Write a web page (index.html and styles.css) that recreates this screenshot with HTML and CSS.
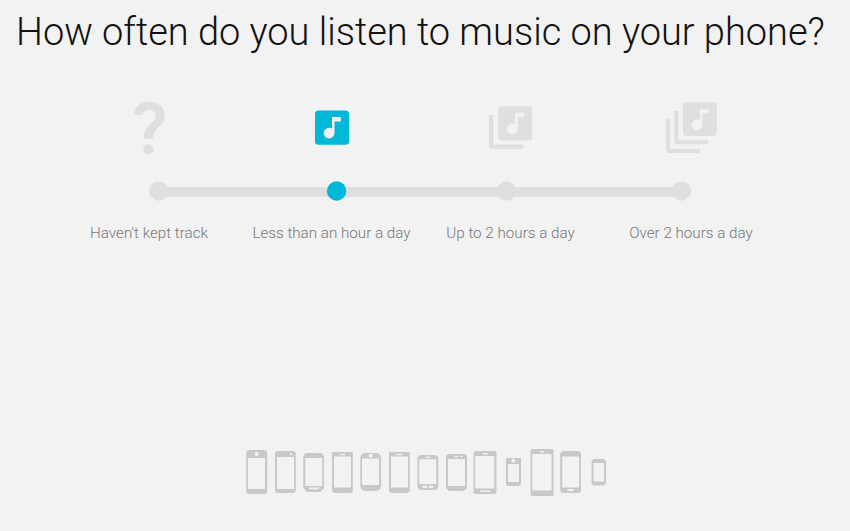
FILE: index.html
```
<!DOCTYPE html>
<html lang="en">
<head>
  <meta charset="UTF-8">
  <title>Music survey</title>
  <link rel="stylesheet" href="styles.css">
</head>
<body>
  <h1>How often do you listen to music on your phone?</h1>

  <!-- Answers -->
  <div class="options">
    <div class="option">
      <svg class="icon" width="54" height="58" viewBox="0 0 54 58">
        <path d="M12 15C12 7 18.500 1.500 27.300 1.500C36.500 1.500 42.500 7 42.500 15.500C42.500 27 31.300 27 31.300 38.700H21.700C21.700 24 33.500 24.500 33.500 16C33.500 12 31 9.700 27.300 9.700C23.600 9.700 21 11.500 21 15z"/>
        <circle cx="26.300" cy="49.300" r="5"/>
      </svg>
      <span class="label">Haven't kept track</span>
    </div>
    <div class="option selected">
      <svg class="icon" width="54" height="58" viewBox="0 0 54 58">
        <path fill-rule="evenodd" d="M13.500 10.500h27a3.500 3.500 0 0 1 3.500 3.500v27.200a3.500 3.500 0 0 1-3.500 3.500h-27a3.500 3.500 0 0 1-3.500-3.500V14a3.500 3.500 0 0 1 3.500-3.500zM27 17v11.500a5.400 5.400 0 1 0 2.500 4.600V21.500h6.300V17z"/>
      </svg>
      <span class="label">Less than an hour a day</span>
    </div>
    <div class="option">
      <svg class="icon" width="54" height="58" viewBox="0 0 54 58">
        <path fill-rule="evenodd" d="M17.700 6.300h27a3.500 3.500 0 0 1 3.500 3.500V37a3.500 3.500 0 0 1-3.500 3.500h-27a3.500 3.500 0 0 1-3.500-3.500V9.800a3.500 3.500 0 0 1 3.500-3.500zM31.200 12.800v11.500a5.400 5.400 0 1 0 2.500 4.600V17.300H40v-4.500z"/>
        <path d="M5 15h4.200v29.500h30V49H8.500A3.500 3.500 0 0 1 5 45.500z"/>
      </svg>
      <span class="label">Up to 2 hours a day</span>
    </div>
    <div class="option">
      <svg class="icon" width="54" height="58" viewBox="0 0 54 58">
        <path fill-rule="evenodd" d="M22.400 2.300h27a3.500 3.500 0 0 1 3.500 3.500V32.500a3.500 3.500 0 0 1-3.500 3.500h-27a3.500 3.500 0 0 1-3.500-3.500V5.800a3.500 3.500 0 0 1 3.500-3.500zM35.900 8.800v11.500a5.400 5.400 0 1 0 2.500 4.600V13.300h6.300V8.800z"/>
        <path d="M10.300 11h4.200v29.300h29.800v4H13.800a3.500 3.500 0 0 1-3.500-3.500z"/>
        <path d="M2 19.200h4.200v29.700H36V53H5.500A3.500 3.500 0 0 1 2 49.500z"/>
      </svg>
      <span class="label">Over 2 hours a day</span>
    </div>
  </div>

  <!-- Slider -->
  <svg class="slider" width="544" height="20" viewBox="0 0 544 20">
    <path d="M10 6h523v9.700H10z"/>
    <circle cx="9.800" cy="10" r="9.700"/>
    <circle class="current" cx="187.600" cy="10" r="9.700"/>
    <circle cx="357.600" cy="10" r="9.700"/>
    <circle cx="532.500" cy="10" r="9.700"/>
  </svg>

  <!-- Phones -->
  <svg class="phones" width="360" height="48" viewBox="246 449 360 48">
    <g class="case">
      <rect x="246.300" y="450" width="21" height="44" rx="3.500"/>
      <rect x="275" y="451" width="20.800" height="42" rx="3"/>
      <path d="M305.500 453h16.500l2 3v32l-3.500 4h-13.500l-3.700-4v-32z"/>
      <path d="M332 452h20.800v39l-2 2h-16.800l-2-2z"/>
      <rect x="360.300" y="453" width="20.800" height="38" rx="5"/>
      <path d="M389 452h20.800v39l-2 2H391l-2-2z"/>
      <rect x="417.500" y="455" width="20.800" height="35" rx="4"/>
      <path d="M448 454h17l2 2v32l-3 3h-15l-3-3v-32z"/>
      <rect x="473.500" y="451" width="23" height="43" rx="2"/>
      <path d="M506 458h15v25q0 3-3 3h-9q-3 0-3-3z"/>
      <rect x="530.500" y="449" width="23" height="47" rx="1.500"/>
      <rect x="560.200" y="451" width="20.800" height="42" rx="3.500"/>
      <rect x="591.500" y="459" width="14.500" height="26.500" rx="3.500"/>
    </g>
    <g class="screen">
      <rect x="248" y="458" width="17" height="31"/>
      <rect x="277" y="457" width="17" height="32"/>
      <rect x="305.300" y="458" width="17" height="28"/>
      <rect x="334" y="456.500" width="17" height="31"/>
      <rect x="362" y="458.500" width="17" height="26.500"/>
      <rect x="391" y="456.500" width="17" height="31"/>
      <rect x="419.300" y="459.300" width="17" height="24.700"/>
      <rect x="448" y="459" width="17" height="27"/>
      <rect x="475.300" y="456" width="19" height="32.500"/>
      <rect x="508" y="464" width="11" height="18"/>
      <rect x="532.300" y="454" width="19.200" height="36.500"/>
      <rect x="562.200" y="456.500" width="17" height="31"/>
      <rect x="593.500" y="463" width="10.500" height="18.500"/>
    </g>
    <!-- cameras, speakers and home buttons -->
    <g class="detail">
      <circle cx="256.700" cy="454" r="2"/>
      <circle cx="290.900" cy="454" r="1.100"/>
      <rect x="309" y="487.500" width="10" height="1.700"/>
      <rect x="339.500" y="453.700" width="5.500" height="1.500"/>
      <circle cx="370.700" cy="455.700" r="2"/>
      <rect x="396.500" y="453.700" width="5.500" height="1.500"/>
      <rect x="425.500" y="456.500" width="4.500" height="1.200"/>
      <rect x="422.700" y="485.700" width="4.300" height="2.300"/>
      <rect x="428.700" y="485.700" width="4.300" height="2.300"/>
      <rect x="454" y="456.300" width="4.500" height="1.200"/>
      <circle cx="461.700" cy="456.500" r="1.100"/>
      <rect x="482.700" y="453" width="5" height="1.500"/>
      <rect x="480" y="490.500" width="10" height="1.400"/>
      <circle cx="513.400" cy="460.700" r="1.900"/>
      <rect x="540" y="451" width="4" height="1.500"/>
      <rect x="567.500" y="489" width="6" height="2"/>
    </g>
  </svg>
</body>
</html>
```
FILE: styles.css
```
body {
  margin: 0;
  height: 531px;
  overflow: hidden;
  display: flex;
  flex-direction: column;
  background-color: #f2f2f2;
  font-family: Roboto, sans-serif;
  font-weight: 300;
}
h1 {
  margin: 9px 0 0 16px;
  font-size: 37.970px;
  line-height: 46px;
  font-weight: 300;
  color: #111;
  white-space: nowrap;
}
svg {
  display: block;
  flex: none;
}
.options {
  display: flex;
  height: 144px;
  margin: 45px 0 0 58.500px;
}
.option {
  flex: none;
  width: 181px;
  display: flex;
  flex-direction: column;
  align-items: center;
  justify-content: space-between;
}
.option:first-child {
  margin-right: 1.500px;
}
.option:nth-child(3) {
  margin-left: -2px;
}
.option:last-child {
  margin-left: -0.500px;
}
.icon {
  fill: #dfdfdf;
}
.selected .icon, .current {
  fill: #00b8d8;
}
.label {
  font-size: 15.200px;
  line-height: 22px;
  color: #777;
  white-space: nowrap;
}
.slider {
  margin: -63px 0 0 149px;
  fill: #dfdfdf;
}
.phones {
  margin: auto 0 34px 246px;
}
.case {
  fill: #c8c8c8;
}
.screen, .detail {
  fill: #f2f2f2;
}
```
